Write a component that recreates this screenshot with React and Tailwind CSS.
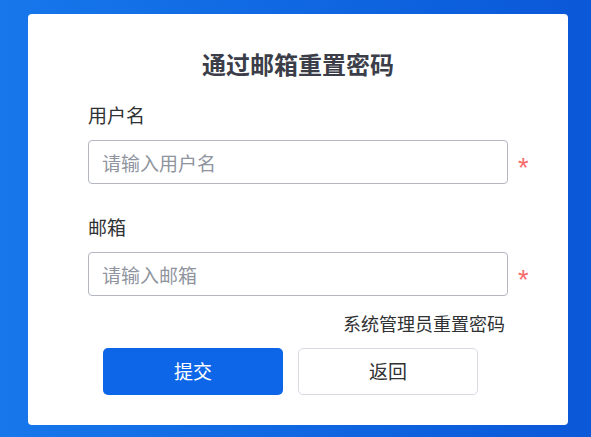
import React from 'react';

const font = { fontFamily: '"Noto Sans CJK SC", "Noto Sans", sans-serif' };

function Field({ label, placeholder, top }) {
  return (
    <div>
      <div className={`${top} text-[19px] leading-[26px] text-[#303133]`}>{label}</div>
      <div className="flex items-center">
        <input
          className="mt-[12px] h-[44px] w-[420px] rounded-[4px] border border-[#b4b6c2] bg-white px-[13px] text-[19px] text-[#303133] outline-none placeholder:text-[#8f949e]"
          placeholder={placeholder}
        />
        <span className="ml-[10px] mt-[24px] font-['Liberation_Sans',sans-serif] text-[27px] leading-none text-[#f56c6c]">*</span>
      </div>
    </div>
  );
}

export default function App() {
  return (
    <div
      className="h-[437px] w-[591px] bg-gradient-to-r from-[#1777eb] to-[#0b58d8] pl-[28px] pt-[14px]"
      style={font}
    >
      <div className="h-[411px] w-[540px] rounded-[4px] bg-white pt-[35px]">
        <h1 className="text-center text-[24px] font-bold leading-[30px] text-[#3b3e48]">
          通过邮箱重置密码
        </h1>
        <div className="pl-[60px]">
          <Field label="用户名" placeholder="请输入用户名" top="mt-[23px]" />
          <Field label="邮箱" placeholder="请输入邮箱" top="mt-[30px]" />
          <div className="mt-[15px] w-[417px] text-right text-[18px] leading-[24px] text-[#303133]">
            系统管理员重置密码
          </div>
          <div className="mt-[13px] flex gap-[15px] pl-[15px]">
            <button className="h-[47px] w-[180px] rounded-[5px] bg-[#0d66e8] text-[19px] text-white">
              提交
            </button>
            <button className="h-[47px] w-[180px] rounded-[5px] border border-[#d8dbe5] bg-white text-[19px] text-[#303133]">
              返回
            </button>
          </div>
        </div>
      </div>
    </div>
  );
}
